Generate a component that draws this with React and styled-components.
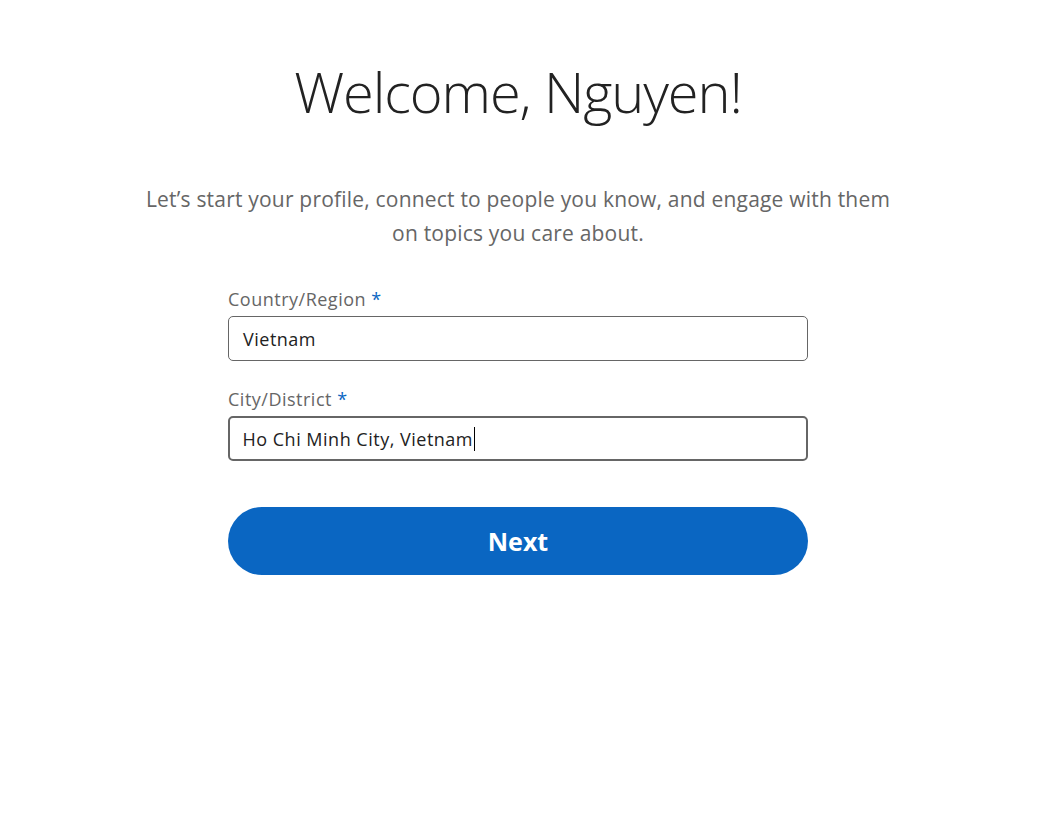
import React from 'react';
import styled, { createGlobalStyle } from 'styled-components';

const GlobalStyle = createGlobalStyle`
  body {
    margin: 0;
    background: #ffffff;
    font-family: "Open Sans", "Noto Sans", sans-serif;
  }
`;

const Page = styled.main`
  width: 1036px;
  display: flex;
  flex-direction: column;
  align-items: center;
  padding-top: 56px;
`;

const Heading = styled.h1`
  margin: 0;
  font-size: 56px;
  font-weight: 300;
  line-height: 70px;
  color: #222222;
  letter-spacing: -1.1px;
`;

const Intro = styled.p`
  margin: 56px 0 0;
  width: 770px;
  text-align: center;
  font-size: 21px;
  line-height: 34px;
  letter-spacing: 0.2px;
  color: #666666;
`;

const Form = styled.form`
  width: 580px;
  margin-top: 37px;
  display: flex;
  flex-direction: column;
`;

const Field = styled.div`
  display: flex;
  flex-direction: column;

  & + & {
    margin-top: 26px;
  }
`;

const Label = styled.label`
  font-size: 18px;
  line-height: 24px;
  letter-spacing: 0.5px;
  color: #666666;
  margin-bottom: 5px;
`;

const Required = styled.span`
  color: #0a66c2;
`;

const Input = styled.div`
  box-sizing: border-box;
  height: 45px;
  display: flex;
  align-items: center;
  padding: 0 ${(p) => (p.focused ? 12.5 : 14)}px;
  border: ${(p) => (p.focused ? '2.5px solid #666666' : '1px solid #666666')};
  border-radius: 5px;
  font-size: 18px;
  letter-spacing: 0.5px;
  color: #222222;
`;

const Caret = styled.span`
  display: inline-block;
  width: 1px;
  height: 24px;
  background: #000000;
  margin-left: 1px;
`;

const NextButton = styled.button`
  margin-top: 46px;
  height: 68px;
  border: none;
  border-radius: 34px;
  background: #0a66c2;
  color: #ffffff;
  font-family: "Open Sans", "Noto Sans", sans-serif;
  font-size: 25px;
  font-weight: 700;
  cursor: pointer;
`;

const App = () => (
  <>
    <GlobalStyle />
    <Page>
      <Heading>Welcome, Nguyen!</Heading>
      <Intro>
        Let’s start your profile, connect to people you know, and engage with them on topics you care about.
      </Intro>
      <Form onSubmit={(e) => e.preventDefault()}>
        <Field>
          <Label>
            Country/Region <Required>*</Required>
          </Label>
          <Input>Vietnam</Input>
        </Field>
        <Field>
          <Label>
            City/District <Required>*</Required>
          </Label>
          <Input focused>
            Ho Chi Minh City, Vietnam
            <Caret />
          </Input>
        </Field>
        <NextButton type="submit">Next</NextButton>
      </Form>
    </Page>
  </>
);

export default App;
